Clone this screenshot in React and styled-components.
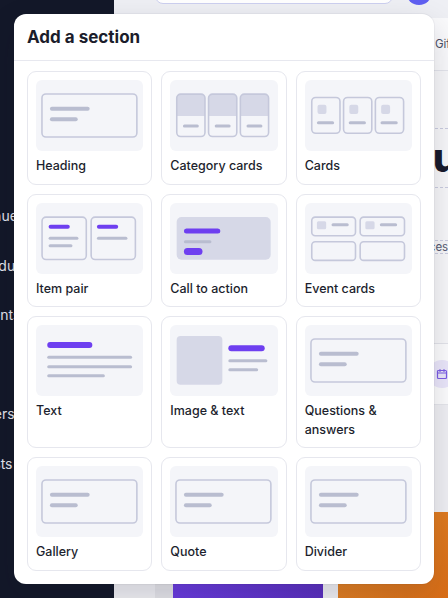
import React from "react";
import styled, { createGlobalStyle } from "styled-components";

const C = {
  outline: "#c5c8db",
  line: "#b9bdd0",
  block: "#d6d8e7",
  accent: "#6e3ff0",
};

const GlobalStyle = createGlobalStyle`
  html, body { margin: 0; padding: 0; }
  body {
    font-family: Inter, "Noto Sans", sans-serif;
    background: #f0f0f4;
    overflow: hidden;
  }
  * { box-sizing: border-box; }
`;

const Shell = styled.div`
  position: relative;
  display: flex;
  width: 448px;
  height: 598px;
  overflow: hidden;
`;

/* ---------- app shell behind the dialog ---------- */

const Sidebar = styled.aside`
  flex: 0 0 114px;
  background: #131829;
  overflow: hidden;
  padding-top: 191px;
`;

const NavList = styled.nav`
  display: flex;
  flex-direction: column;
  margin-left: -24px;
`;

const NavItem = styled.div`
  height: 49.5px;
  display: flex;
  align-items: center;
  font-size: 14px;
  color: #e3e5ee;
  white-space: nowrap;
`;

const NavGap = styled.div`
  height: 49.5px;
`;

const Main = styled.main`
  flex: 1;
  min-width: 0;
  display: flex;
  flex-direction: column;
  background: #f0f0f4;
  white-space: nowrap;
`;

const TopBar = styled.header`
  flex: none;
  margin-top: -26px;
  height: 44px;
  display: flex;
  align-items: flex-start;
  gap: 13px;
  padding: 0 16px 0 41px;
  background: #eeeff4;
`;

const Search = styled.div`
  width: 238px;
  height: 30px;
  background: #fff;
  border: 1px solid #cdd0f0;
  border-radius: 8px;
`;

const Avatar = styled.div`
  width: 26px;
  height: 26px;
  margin-top: 5px;
  border-radius: 50%;
  background: #5f5ff1;
`;

const TabBar = styled.div`
  flex: none;
  height: 53px;
  display: flex;
  align-items: center;
  padding-left: 21px;
  background: #fafafc;
  border-bottom: 1px solid #e4e5ec;
`;

const Tab = styled.span`
  flex: none;
  width: 75px;
  font-size: 11.5px;
  color: #4b4f66;
`;

const Hero = styled.section`
  flex: none;
  height: 273px;
  padding: 57px 0 0 41px;
  display: flex;
  flex-direction: column;
  align-items: flex-start;
  gap: 52px;
  background: #f8f8fa;
  border-bottom: 1px solid #e3e4ea;
`;

const HeroTitle = styled.h1`
  margin: 0;
  font-size: 40px;
  font-weight: 800;
  letter-spacing: -0.5px;
  line-height: 58px;
  color: #181a2c;
  border-top: 1px dashed #cbcde0;
  border-bottom: 1px dashed #cbcde0;
`;

const HeroSub = styled.p`
  margin: 0;
  font-size: 11.5px;
  line-height: 12px;
  color: #555a70;
  border-top: 1px dashed #cbcde0;
  border-bottom: 1px dashed #cbcde0;
`;

const Details = styled.section`
  flex: none;
  height: 61px;
  padding: 16px 0 0 314px;
  background: #fdfdfe;
  border-bottom: 1px solid #e6e7ec;
`;

const Badge = styled.div`
  width: 28px;
  height: 28px;
  border-radius: 50%;
  background: #ebe7fb;
  display: flex;
  align-items: center;
  justify-content: center;
  color: #7b5ce6;
`;

const Body = styled.section`
  flex: 1;
  padding: 107px 0 0 41px;
  display: flex;
  align-items: flex-start;
`;

const Thumb = styled.div`
  flex: none;
  width: ${(p) => p.$w}px;
  height: 120px;
  margin-left: ${(p) => p.$gap || 0}px;
  background: ${(p) => p.$bg};
`;

/* ---------- dialog ---------- */

const Dialog = styled.div`
  position: absolute;
  left: 14px;
  top: 14px;
  width: 420px;
  background: #fff;
  border-radius: 12px;
  box-shadow: 0 12px 32px rgba(17, 19, 40, 0.16), 0 0 0 1px rgba(17, 19, 40, 0.04);
`;

const DialogHeader = styled.div`
  height: 47px;
  padding: 0 13px;
  display: flex;
  align-items: center;
  border-bottom: 1px solid #e7e8ef;
`;

const DialogTitle = styled.h2`
  margin: 0;
  font-size: 17px;
  font-weight: 700;
  color: #1b1d2b;
`;

const Grid = styled.div`
  display: grid;
  grid-template-columns: repeat(3, 1fr);
  gap: 9px;
  padding: 10px 13px 13px;
`;

const Tile = styled.button`
  display: flex;
  flex-direction: column;
  align-items: stretch;
  text-align: left;
  padding: 8px;
  background: #fff;
  border: 1px solid #e6e7ee;
  border-radius: 9px;
  font: inherit;
  cursor: pointer;
`;

const Preview = styled.div`
  height: 71px;
  border-radius: 6px;
  background: #f4f5f9;
  svg { display: block; width: 100%; height: 71px; }
`;

const Label = styled.span`
  margin-top: 6px;
  font-size: 12.5px;
  font-weight: 500;
  line-height: 18.5px;
  color: #1d1f2e;
`;

/* ---------- preview drawings (108 x 71) ---------- */

const Bar = ({ x, y, w, h = 3, c = C.line }) => (
  <rect x={x} y={y} width={w} height={h} rx={h / 2} fill={c} />
);

const Frame = ({ x, y, w, h, r = 4 }) => (
  <rect x={x} y={y} width={w} height={h} rx={r} fill="none" stroke={C.outline} strokeWidth="1.6" />
);

const Svg = ({ children }) => (
  <svg viewBox="0 0 108 71" preserveAspectRatio="none">{children}</svg>
);

const BoxedLines = () => (
  <Svg>
    <Frame x={6} y={14} w={95.5} h={43} />
    <Bar x={14} y={26.7} w={40} h={4} />
    <Bar x={14} y={37.3} w={28} h={4} />
  </Svg>
);

const CategoryCards = () => (
  <Svg>
    {[6, 38, 70].map((x) => (
      <g key={x}>
        <path
          d={`M${x + 0.8} ${18.1} Q${x + 0.8} 14.1 ${x + 4.8} 14.1 H${x + 25.2} Q${x + 29.2} 14.1 ${x + 29.2} 18.1 V36 H${x + 0.8} Z`}
          fill={C.block}
        />
        <Frame x={x + 0.8} y={14.1} w={28.4} h={42.4} />
        <Bar x={x + 7} y={44.5} w={16} h={3} />
      </g>
    ))}
  </Svg>
);

const Cards = () => (
  <Svg>
    {[6, 38, 70].map((x) => (
      <g key={x}>
        <Frame x={x + 0.8} y={17.5} w={28.4} h={35.8} />
        <rect x={x + 6.6} y={24.8} width={9} height={9.2} rx={2} fill={C.block} />
        <Bar x={x + 6} y={41.2} w={17.3} h={3} />
      </g>
    ))}
  </Svg>
);

const ItemPair = () => (
  <Svg>
    <Frame x={6.1} y={14.1} w={44.5} h={42.4} />
    <Frame x={55.5} y={14.1} w={44.5} h={42.4} />
    <Bar x={12.7} y={21.7} w={21.3} h={4} c={C.accent} />
    <Bar x={12.7} y={33.8} w={30} />
    <Bar x={12.7} y={41.2} w={24} />
    <Bar x={61.3} y={21.7} w={21.4} h={4} c={C.accent} />
    <Bar x={61.3} y={33.8} w={30.7} />
  </Svg>
);

const CallToAction = () => (
  <Svg>
    <rect x={6.7} y={14} width={94.6} height={42.7} rx={5} fill={C.block} />
    <Bar x={14} y={25.5} w={36.7} h={5} c={C.accent} />
    <Bar x={14} y={37.2} w={27.7} />
    <Bar x={14} y={45} w={18.7} h={7} c={C.accent} />
  </Svg>
);

const EventCards = () => (
  <Svg>
    <Frame x={6.8} y={14.1} w={44} h={18.6} r={3.5} />
    <Frame x={55.5} y={14.1} w={44.6} h={18.6} r={3.5} />
    <Frame x={6.8} y={38.8} w={44} h={18.6} r={3.5} />
    <Frame x={55.5} y={38.8} w={44.6} h={18.6} r={3.5} />
    <rect x={12} y={18.2} width={9.3} height={8} rx={1.5} fill={C.block} />
    <Bar x={26.7} y={20.2} w={17.3} />
    <rect x={60.7} y={18.2} width={9.3} height={8} rx={1.5} fill={C.block} />
    <Bar x={75.3} y={20.2} w={17.4} />
  </Svg>
);

const TextBlock = () => (
  <Svg>
    <Bar x={11.3} y={17} w={45.4} h={6} c={C.accent} />
    <Bar x={11.3} y={30.8} w={85.4} />
    <Bar x={11.3} y={40.2} w={85.4} />
    <Bar x={11.3} y={49.2} w={58} />
  </Svg>
);

const ImageText = () => (
  <Svg>
    <rect x={6.7} y={11} width={46} height={48.7} rx={4} fill={C.block} />
    <Bar x={58.7} y={20.3} w={36.6} h={6} c={C.accent} />
    <Bar x={58.7} y={34.2} w={39.3} />
    <Bar x={58.7} y={43.2} w={30} />
  </Svg>
);

const sections = [
  { label: "Heading", Art: BoxedLines },
  { label: "Category cards", Art: CategoryCards },
  { label: "Cards", Art: Cards },
  { label: "Item pair", Art: ItemPair },
  { label: "Call to action", Art: CallToAction },
  { label: "Event cards", Art: EventCards },
  { label: "Text", Art: TextBlock },
  { label: "Image & text", Art: ImageText },
  { label: "Questions & answers", Art: BoxedLines },
  { label: "Gallery", Art: BoxedLines },
  { label: "Quote", Art: BoxedLines },
  { label: "Divider", Art: BoxedLines },
];

const CalendarIcon = () => (
  <svg width="12" height="12" viewBox="0 0 24 24" fill="none" stroke="currentColor" strokeWidth="2.4" strokeLinecap="round" strokeLinejoin="round">
    <rect x="3" y="5" width="18" height="16" rx="2" />
    <path d="M8 3v4M16 3v4M3 10h18" />
  </svg>
);

export default function App() {
  return (
    <>
      <GlobalStyle />
      <Shell>
        <Sidebar>
          <NavList>
            <NavItem>Venue</NavItem>
            <NavItem>Products</NavItem>
            <NavItem>Events</NavItem>
            <NavGap />
            <NavItem>Users</NavItem>
            <NavItem>Posts</NavItem>
          </NavList>
        </Sidebar>
        <Main>
          <TopBar>
            <Search />
            <Avatar />
          </TopBar>
          <TabBar>
            <Tab>Overview</Tab>
            <Tab>Tickets</Tab>
            <Tab>Orders</Tab>
            <Tab>Discounts</Tab>
            <Tab>Gift cards</Tab>
          </TabBar>
          <Hero>
            <HeroTitle>Summer Fun Run</HeroTitle>
            <HeroSub>Live music, local foods and unforgettable experiences</HeroSub>
          </Hero>
          <Details>
            <Badge>
              <CalendarIcon />
            </Badge>
          </Details>
          <Body>
            <Thumb $w={18} $bg="#e4e4e9" />
            <Thumb $w={150} $bg="linear-gradient(100deg, #6b3de2, #5a2fbe)" />
            <Thumb $w={150} $gap={15} $bg="linear-gradient(135deg, #e58a2a, #d6630f)" />
          </Body>
        </Main>

        <Dialog role="dialog" aria-label="Add a section">
          <DialogHeader>
            <DialogTitle>Add a section</DialogTitle>
          </DialogHeader>
          <Grid>
            {sections.map(({ label, Art }) => (
              <Tile key={label} type="button">
                <Preview>
                  <Art />
                </Preview>
                <Label>{label}</Label>
              </Tile>
            ))}
          </Grid>
        </Dialog>
      </Shell>
    </>
  );
}
